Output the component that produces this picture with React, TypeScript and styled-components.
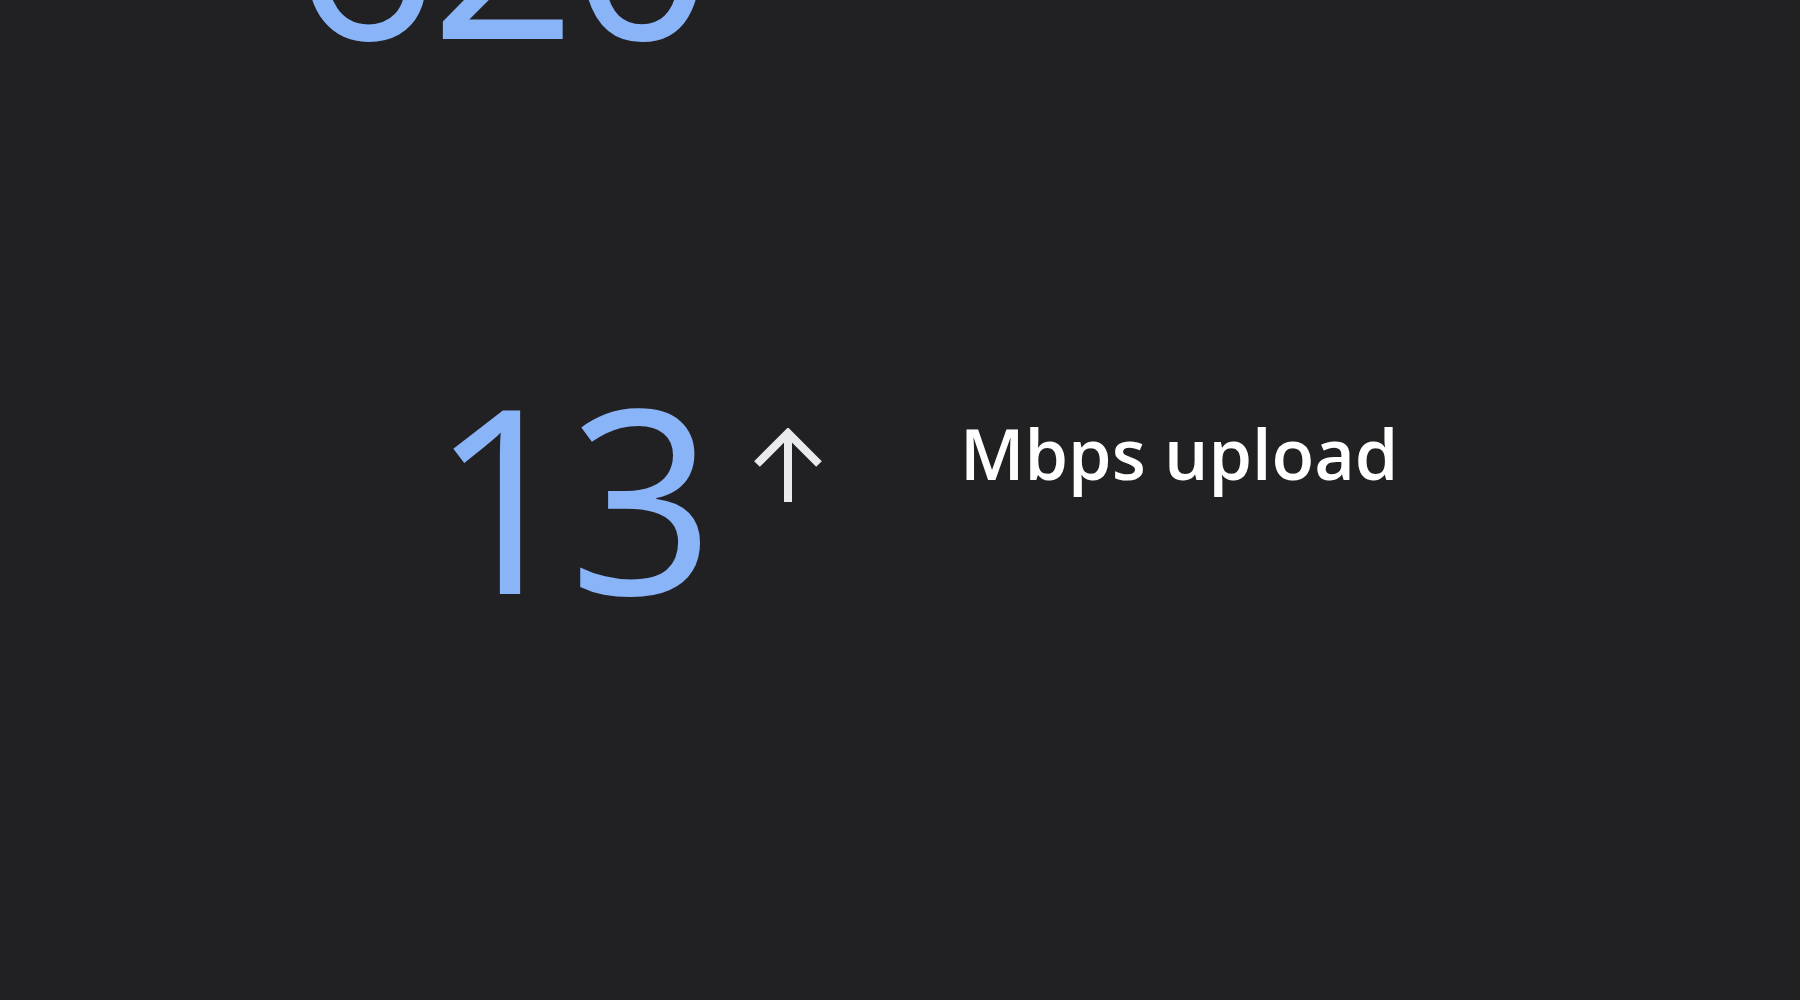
import React from 'react'
import styled, { createGlobalStyle } from 'styled-components'

const GlobalStyle = createGlobalStyle`
  html, body {
    margin: 0;
    padding: 0;
    background: #212123;
    overflow: hidden;
  }
  body {
    font-family: "Open Sans", "Liberation Sans", sans-serif;
  }
`

const Page = styled.div`
  width: 1800px;
  height: 1000px;
  overflow: hidden;
  background: #212123;
`

const List = styled.div`
  display: flex;
  flex-direction: column;
  gap: 299px;
  margin-top: -188px;
  padding-left: 290px;
`

const Row = styled.div`
  display: grid;
  grid-template-columns: 420px 250px auto;
  align-items: start;
`

const Value = styled.div`
  justify-self: end;
  font-size: 256px;
  line-height: 1;
  font-weight: 400;
  color: #8ab4f8;
  letter-spacing: -8px;
  padding-right: 3px;
`

const Arrow = styled.div`
  margin-top: 61px;
  margin-left: 42px;
  width: 72px;
  height: 74px;
  color: #e8eaed;

  svg {
    display: block;
  }
`

const Label = styled.div`
  margin-top: 51px;
  font-size: 70px;
  line-height: 1;
  font-weight: 600;
  color: #ffffff;
`

const ArrowIcon = ({ down }: { down?: boolean }) => (
  <svg width="72" height="74" viewBox="0 0 72 74" style={down ? { transform: 'rotate(180deg)' } : undefined}>
    <path d="M36 6 V74 M5 36 L36 5 L67 36" fill="none" stroke="currentColor" strokeWidth="8" />
  </svg>
)

const rows = [
  { value: '620', label: 'Mbps download', down: true },
  { value: '13', label: 'Mbps upload', down: false },
]

const App = () => {
  return (
    <Page>
      <GlobalStyle />
      <List>
        {rows.map((r) => (
          <Row key={r.label}>
            <Value>{r.value}</Value>
            <Arrow>
              <ArrowIcon down={r.down} />
            </Arrow>
            <Label>{r.label}</Label>
          </Row>
        ))}
      </List>
    </Page>
  )
}

export default App
